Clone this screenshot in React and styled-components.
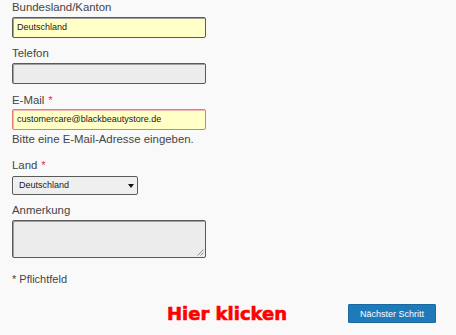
import React from "react";
import styled, { createGlobalStyle } from "styled-components";

const Global = createGlobalStyle`
  html, body { margin: 0; padding: 0; background: #f9f9f9; }
  body { font-family: "Liberation Sans", Arial, sans-serif; }
`;

const Page = styled.div`
  width: 456px;
  height: 335px;
  overflow: hidden;
  box-sizing: border-box;
  padding: 1px 0 0 12px;
  display: flex;
  flex-direction: column;
  color: #444;
`;

const Field = styled.div`
  display: flex;
  flex-direction: column;
  align-items: flex-start;
  margin-top: ${(p) => p.$mt || 0}px;
`;

const Label = styled.label`
  font-size: 11.4px;
  line-height: 13px;
  height: 13px;
  color: #444;
  margin-bottom: ${(p) => (p.$mb !== undefined ? p.$mb : 3)}px;
`;

const Star = styled.span`
  color: #e03a3a;
  margin-left: 4px;
`;

const Input = styled.div`
  box-sizing: border-box;
  width: 194px;
  height: 21px;
  border: 1px solid ${(p) => (p.$error ? "#e87878" : "#5a5a5a")};
  border-radius: 2px;
  box-shadow: inset 1px 1px 0 ${(p) => (p.$error ? "#f4b8b0" : "#a0a0a0")};
  background: ${(p) => (p.$filled ? "#ffffc6" : "#ececec")};
  font-size: 9px;
  line-height: 19px;
  padding-left: 4px;
  color: #1a1a1a;
`;

const Hint = styled.div`
  font-size: 11.4px;
  line-height: 13px;
  margin-top: 3px;
  color: #444;
`;

const Select = styled.div`
  box-sizing: border-box;
  width: 126px;
  height: 19px;
  border: 1px solid #5a5a5a;
  border-radius: 2px;
  background: #efefef;
  font-size: 9px;
  line-height: 17px;
  padding-left: 6px;
  padding-right: 3px;
  color: #1a1a1a;
  display: flex;
  justify-content: space-between;
  align-items: center;
`;

const Arrow = styled.span`
  width: 0;
  height: 0;
  border-left: 3px solid transparent;
  border-right: 3px solid transparent;
  border-top: 4px solid #111;
`;

const TextArea = styled.div`
  position: relative;
  box-sizing: border-box;
  width: 194px;
  height: 38px;
  border: 1px solid #5a5a5a;
  border-radius: 2px;
  box-shadow: inset 1px 1px 0 #a0a0a0;
  background: #ececec;
`;

const Grip = styled.svg`
  position: absolute;
  right: 1px;
  bottom: 1px;
`;

const Required = styled.div`
  font-size: 11px;
  line-height: 13px;
  margin-top: 15px;
  color: #444;
`;

const Footer = styled.div`
  display: flex;
  align-items: center;
  height: 19px;
  margin-top: 18px;
  padding-left: 155px;
`;

const Click = styled.div`
  font-family: "DejaVu Sans", sans-serif;
  font-weight: 700;
  font-size: 18px;
  line-height: 21px;
  color: #ff0000;
  -webkit-text-stroke: 0.6px #ff0000;
  width: 181px;
`;

const Button = styled.button`
  box-sizing: border-box;
  width: 88px;
  height: 19px;
  background: #1e7ab8;
  border: 1px solid #1968a0;
  border-radius: 1px;
  color: #fff;
  font-family: "Liberation Sans", Arial, sans-serif;
  font-size: 9px;
  padding: 0;
`;

export default function App() {
  return (
    <>
      <Global />
      <Page>
        <Field>
          <Label>Bundesland/Kanton</Label>
          <Input $filled>Deutschland</Input>
        </Field>
        <Field $mt={9}>
          <Label>Telefon</Label>
          <Input />
        </Field>
        <Field $mt={10}>
          <Label $mb={2}>
            E-Mail<Star>*</Star>
          </Label>
          <Input $filled $error>customercare@blackbeautystore.de</Input>
          <Hint>Bitte eine E-Mail-Adresse eingeben.</Hint>
        </Field>
        <Field $mt={13}>
          <Label $mb={4}>
            Land<Star>*</Star>
          </Label>
          <Select>
            <span>Deutschland</span>
            <Arrow />
          </Select>
        </Field>
        <Field $mt={9}>
          <Label>Anmerkung</Label>
          <TextArea>
            <Grip width="7" height="7" viewBox="0 0 7 7">
              <path d="M6.5 0.5 L0.5 6.5 M6.5 3.5 L3.5 6.5" stroke="#8a8a8a" strokeWidth="1" />
            </Grip>
          </TextArea>
        </Field>
        <Required>* Pflichtfeld</Required>
        <Footer>
          <Click>Hier klicken</Click>
          <Button>Nächster Schritt</Button>
        </Footer>
      </Page>
    </>
  );
}
